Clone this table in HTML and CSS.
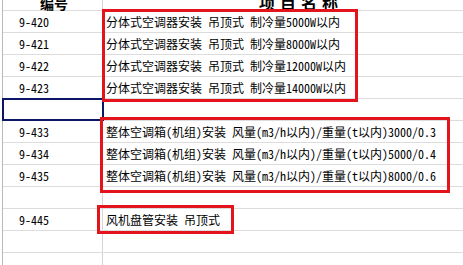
FILE: index.html
```html
<!DOCTYPE html>
<html lang="zh">
<head>
<meta charset="utf-8">
<link rel="stylesheet" href="styles.css">
</head>
<body>
<div class="sheet">
  <div class="row head"><div class="c1">编号</div><div class="c2">项目名称</div></div>
  <div class="row"><div class="c1">9-420</div><div class="c2">分体式空调器安装 吊顶式 制冷量5000W以内</div></div>
  <div class="row"><div class="c1">9-421</div><div class="c2">分体式空调器安装 吊顶式 制冷量8000W以内</div></div>
  <div class="row"><div class="c1">9-422</div><div class="c2">分体式空调器安装 吊顶式 制冷量12000W以内</div></div>
  <div class="row"><div class="c1">9-423</div><div class="c2">分体式空调器安装 吊顶式 制冷量14000W以内</div></div>
  <div class="row"><div class="c1 sel"></div><div class="c2"></div></div>
  <div class="row"><div class="c1">9-433</div><div class="c2">整体空调箱(机组)安装 风量(m3/h以内)/重量(t以内)3000/0.3</div></div>
  <div class="row"><div class="c1">9-434</div><div class="c2">整体空调箱(机组)安装 风量(m3/h以内)/重量(t以内)5000/0.4</div></div>
  <div class="row"><div class="c1">9-435</div><div class="c2">整体空调箱(机组)安装 风量(m3/h以内)/重量(t以内)8000/0.6</div></div>
  <div class="row"><div class="c1"></div><div class="c2"></div></div>
  <div class="row"><div class="c1">9-445</div><div class="c2">风机盘管安装 吊顶式</div></div>
  <div class="row"><div class="c1"></div><div class="c2"></div></div>
  <div class="row"><div class="c1"></div><div class="c2"></div></div>
</div>
<div class="mark m1"></div>
<div class="mark m2"></div>
<div class="mark m3"></div>
</body>
</html>
```
FILE: styles.css
```css
html, body {
  margin: 0;
  height: 100%;
  overflow: hidden;
  background: #fff;
}
body {
  font-family: "Noto Sans CJK SC", sans-serif;
  font-size: 12px;
  font-feature-settings: "hwid" 1;
  color: #000;
  position: relative;
}
.sheet {
  margin-top: -11px;
  margin-left: 2px;
  border-left: 1px solid #b9b9b9;
}
.row {
  display: grid;
  grid-template-columns: 100px 1fr;
  height: 21px;
  line-height: 21px;
  border-bottom: 1px solid #dcdcdc;
}
.c1 {
  box-sizing: border-box;
  border-right: 1px solid #d4d4d4;
  padding-left: 16px;
  white-space: nowrap;
}
.c2 {
  padding-left: 3px;
  white-space: nowrap;
}
.head .c1, .head .c2 {
  font-weight: bold;
  font-size: 16px;
  display: flex;
  align-items: flex-end;
  line-height: 1;
  padding-bottom: 0;
}
.head .c1 { padding-left: 37px; font-size: 14px; }
.head .c2 { padding-left: 156px; letter-spacing: 5px; }
.sel {
  outline: 2px solid #0b1766;
  outline-offset: -1px;
}
.mark {
  position: absolute;
  box-sizing: border-box;
  border: 3px solid #e3141b;
}
.m1 { left: 102px; top: 9px; width: 256px; height: 93px; }
.m2 { left: 100px; top: 117px; width: 350px; height: 76px; }
.m3 { left: 97px; top: 205px; width: 137px; height: 29px; }
```
